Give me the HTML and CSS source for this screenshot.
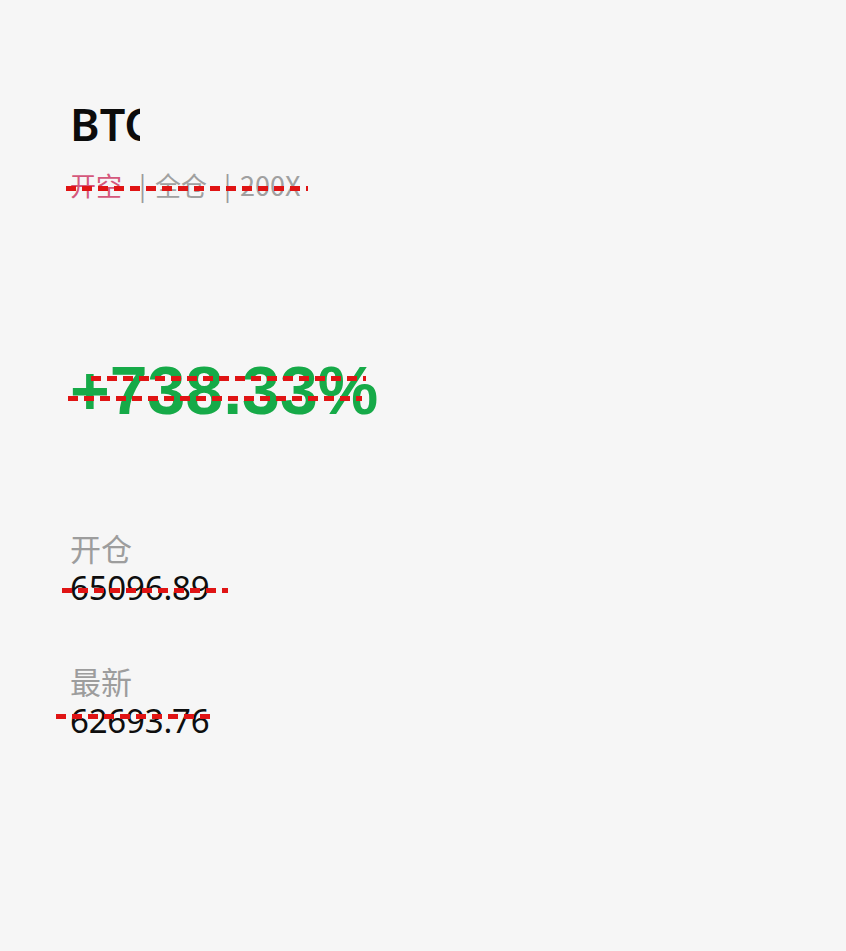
FILE: index.html
```html
<!DOCTYPE html>
<html lang="zh-CN">
<head>
<meta charset="utf-8">
<title>BTC 仓位</title>
<link rel="stylesheet" href="styles.css">
</head>
<body>
<main class="card">
  <div class="symbol-clip"><h1 class="symbol">BTC</h1></div>
  <div class="tags struck">
    <span class="side">开空</span>
    <span class="sep">|</span>
    <span class="tag">全仓</span>
    <span class="sep">|</span>
    <span class="tag">200X</span>
    <i class="dash dash-tags"></i>
  </div>

  <div class="pnl struck">
    +738.33%
    <i class="dash dash-pnl-a"></i>
    <i class="dash dash-pnl-b"></i>
  </div>

  <section class="stat stat-open">
    <div class="label">开仓</div>
    <div class="value struck">65096.89<i class="dash dash-open"></i></div>
  </section>

  <section class="stat stat-last">
    <div class="label">最新</div>
    <div class="value struck">62693.76<i class="dash dash-last"></i></div>
  </section>
</main>
</body>
</html>
```

FILE: styles.css
```css
html, body {
  margin: 0;
  padding: 0;
  background: #f6f6f6;
}

body {
  font-family: "Noto Sans", "Noto Sans CJK SC", sans-serif;
  color: #111;
}

.card {
  padding: 97px 0 0 70px;
  display: flex;
  flex-direction: column;
  align-items: flex-start;
}

/* the ticker is cut off mid-letter on the right */
.symbol-clip {
  width: 70px;
  overflow: hidden;
}

.symbol {
  margin: 0;
  white-space: nowrap;
  font-size: 45px;
  line-height: 54px;
  font-weight: 600;
  color: #0c0c0c;
}

.struck {
  position: relative;
}

/* red dashed strike marks drawn over the figures */
.dash {
  position: absolute;
  height: 5px;
  background: repeating-linear-gradient(90deg, #e01414 0 10px, transparent 10px 16px);
}

.tags {
  margin-top: 16px;
  display: flex;
  align-items: center;
  font-family: "Noto Sans CJK SC", sans-serif;
  font-size: 26px;
  line-height: 36px;
  color: #a0a0a0;
}

.side {
  color: #d4587c;
}

.sep {
  margin: 0 9px 0 17px;
  color: #9a9a9a;
}

.tag:last-of-type {
  font-size: 27px;
}

.dash-tags {
  left: -4px;
  width: 242px;
  top: 19px;
}

.pnl {
  margin-top: 151px;
  font-family: "Liberation Sans", Arial, sans-serif;
  font-weight: 700;
  font-size: 68px;
  line-height: 72px;
  color: #16aa48;
}

.dash-pnl-a {
  left: 21px;
  width: 275px;
  top: 22px;
}

.dash-pnl-b {
  left: -2px;
  width: 294px;
  top: 42px;
}

.stat {
  display: flex;
  flex-direction: column;
  align-items: flex-start;
}

.stat-open {
  margin-top: 104px;
}

.stat-last {
  margin-top: 53px;
}

.label {
  font-family: "Noto Sans CJK SC", sans-serif;
  font-size: 31px;
  line-height: 36px;
  color: #9d9d9d;
  white-space: nowrap;
}

.value {
  font-size: 33px;
  line-height: 44px;
  color: #0e0e0e;
  letter-spacing: -0.2px;
}

.dash-open {
  left: -8px;
  width: 166px;
  top: 22px;
}

.dash-last {
  left: -14px;
  width: 154px;
  top: 15px;
}
```
